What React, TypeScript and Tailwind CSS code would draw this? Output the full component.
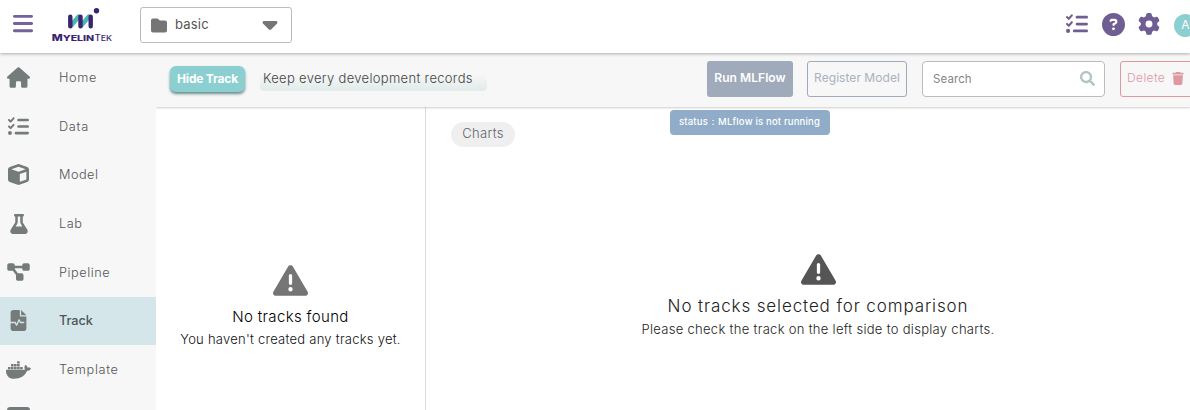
import React from 'react';
import {
  FaBars, FaFolder, FaCaretDown, FaListCheck, FaCircleQuestion, FaGear, FaHouse, FaCube, FaFlask,
  FaDiagramProject, FaFileWaveform, FaDocker, FaTriangleExclamation, FaTrash,
} from 'react-icons/fa6';
import { FaSearch } from 'react-icons/fa';
import type { IconType } from 'react-icons';

const items: { label: string; icon: IconType; size: string; text: string }[] = [
  { label: 'Home', icon: FaHouse, size: 'w-[23px] h-[21px]', text: 'tracking-[0.6px]' },
  { label: 'Data', icon: FaListCheck, size: 'w-[21px] h-[21px]', text: 'tracking-[0.7px]' },
  { label: 'Model', icon: FaCube, size: 'w-[21px] h-[21px]', text: 'tracking-[0.45px]' },
  { label: 'Lab', icon: FaFlask, size: 'w-[20px] h-[20px]', text: 'tracking-[0.5px]' },
  { label: 'Pipeline', icon: FaDiagramProject, size: 'w-[23px] h-[20px]', text: 'tracking-[0.55px]' },
  { label: 'Track', icon: FaFileWaveform, size: 'w-[21px] h-[21px]', text: 'tracking-[-0.1px]' },
  { label: 'Template', icon: FaDocker, size: 'w-[25px] h-[22px]', text: 'tracking-[0.65px]' },
];

function Logo() {
  return (
    <svg className="block h-[36px] w-[62px]" viewBox="0 0 62 36">
      <path d="M18.9 18.8 26.5 9.8M29 18.8 36.8 9.8" stroke="#45b9b3" strokeWidth="4.6" strokeLinecap="round" />
      <path d="M18.3 9.7V19.3M28.5 9.7V19.3M38.7 9.7V19.3" stroke="#3b2370" strokeWidth="4.4" strokeLinecap="round" />
      <circle cx="44.5" cy="3.8" r="2.7" fill="#3b2370" />
      <text x="-0.3" y="34.4" fill="#3b2370" fontFamily="Inter, sans-serif" fontWeight="800" textLength="42.5" lengthAdjust="spacingAndGlyphs">
        <tspan fontSize="8.4">M</tspan><tspan fontSize="7.6">YELIN</tspan>
      </text>
      <text x="42.5" y="34.4" fill="#3b2370" fontFamily="Inter, sans-serif" fontWeight="500" textLength="17.5" lengthAdjust="spacingAndGlyphs">
        <tspan fontSize="8.4">T</tspan><tspan fontSize="7.6">EK</tspan>
      </text>
    </svg>
  );
}

function Header() {
  return (
    <header className="relative z-20 flex h-[53px] shrink-0 items-start bg-white shadow-[0_1px_3px_rgba(0,0,0,0.3)]">
      <FaBars className="ml-[12px] mt-[12px] h-[23px] w-[22px] shrink-0 text-[#75629a]" />
      <div className="ml-[18px] mt-[7px]"><Logo /></div>
      <button className="ml-[26px] mt-[7px] flex h-[36px] w-[152px] items-center rounded-[3px] border border-[#bcbcbc] pl-[10px] pr-[13px] text-[#757575]">
        <FaFolder className="h-[17px] w-[16px]" />
        <span className="ml-[8px] text-[13px] tracking-[0.2px] text-[#555]">basic</span>
        <FaCaretDown className="-mt-[3px] ml-auto h-[24px] w-[16px]" />
      </button>
      <div className="ml-auto flex shrink-0 items-center pt-[11px] text-[#6f5e93]">
        <FaListCheck className="size-[22px]" />
        <FaCircleQuestion className="ml-[14px] size-[23px]" />
        <FaGear className="ml-[13px] size-[22px]" />
        <span className="-mr-[7px] ml-[14px] mt-[3px] flex size-[23px] items-center justify-center rounded-full bg-[#8ccfd1] pb-[2px] text-[12px] text-white">A</span>
      </div>
    </header>
  );
}

function Sidebar() {
  return (
    <nav className="h-full w-[156px] shrink-0 overflow-hidden bg-[#f7f7f7] pt-[0.3px] text-[#757b7b]">
      {items.map(({ label, icon: Icon, size, text }) => (
        <div key={label} className={`flex h-[48.66px] items-center ${label === 'Track' ? 'bg-[#d4e6ea] font-medium text-[#4c5659]' : 'font-light text-[#555]'}`}>
          <span className="ml-[4px] flex w-[29px] justify-center text-[#757b7b]"><Icon className={size} /></span>
          <span className={`ml-[26px] text-[12.75px] ${text}`}>{label}</span>
        </div>
      ))}
      <div className="ml-[7px] mt-[13px] h-4 w-[23px] rounded-[3px] bg-[#757b7b]" />
    </nav>
  );
}

function Toolbar() {
  return (
    <div className="relative z-10 flex h-[54px] shrink-0 items-start bg-[#f7f7f7] pt-[8px] shadow-[0_1px_2px_rgba(0,0,0,0.2)]">
      <button className="ml-[14px] mt-[5px] h-[26px] w-[75px] shrink-0 whitespace-nowrap rounded-[6px] bg-[#8ccfd1] pb-px text-[12px] font-bold tracking-[-0.2px] text-white shadow-[0_2px_3px_#668b8c]">Hide Track</button>
      <p className="ml-[15px] mt-[6px] h-[24px] w-[227px] shrink-0 whitespace-nowrap rounded-[4px] bg-linear-to-b from-[#f7f7f7] from-30% to-[#e0ebea] pl-[3px] text-[13px] font-light leading-[23px] tracking-[0.32px] text-[#444]">Keep every development records</p>
      <button className="ml-[220px] h-[36px] w-[86px] shrink-0 whitespace-nowrap rounded-[3px] bg-[#9fabba] pb-[2px] text-[12px] font-semibold tracking-[0.05px] text-white">Run MLFlow</button>
      <button className="ml-[14px] h-[36px] w-[100px] shrink-0 whitespace-nowrap rounded-[3px] border border-[#9fabba] pb-[2px] text-[12px] tracking-[0.05px] text-[#aab1c0]">Register Model</button>
      <div className="ml-[15px] flex h-[36px] w-[183px] shrink-0 items-center rounded-[4px] border border-[#bcbcbc] bg-white pl-[10px] pr-[9px]">
        <span className="pt-[2px] text-[11.5px] tracking-[0.1px] text-[#858585]">Search</span>
        <FaSearch className="-mt-[2px] ml-auto size-[15px] text-[#b3c4c8]" />
      </div>
      <button className="ml-[15px] flex h-[36px] w-[90px] shrink-0 items-center rounded-[3px] border border-[#de98a2] pb-[2px] pl-[6px] text-[12px] font-light tracking-[0.4px] text-[#de98a2]">
        Delete<FaTrash className="ml-[7px] h-[13px] w-[12px]" />
      </button>
    </div>
  );
}

export default function App() {
  return (
    <div className="flex h-[410px] w-[1190px] flex-col overflow-hidden bg-white font-['Inter',sans-serif]">
      <Header />
      <div className="flex min-h-0 flex-1">
        <Sidebar />
        <main className="flex min-w-0 flex-1 flex-col overflow-hidden">
          <Toolbar />
          <div className="relative flex min-h-0 flex-1">
            <div className="absolute left-[514px] top-[3px] z-20 h-[25px] w-[160px] whitespace-nowrap rounded-[4px] bg-[#90acc8] pl-[9px] text-[9.5px] font-medium leading-[24px] tracking-[0.18px] text-white">status：MLflow is not running</div>
            <section className="flex w-[270px] shrink-0 flex-col items-center border-r border-[#dcdcdc] pt-[156px]">
              <FaTriangleExclamation className="size-[35px] text-[#757575]" />
              <h2 className="mt-[8px] whitespace-nowrap text-[15px] font-light leading-[22px] tracking-[0.35px] text-black">No tracks found</h2>
              <p className="mt-[1px] whitespace-nowrap text-[13px] font-light leading-[20px] tracking-[0.25px] text-[#111]">You haven't created any tracks yet.</p>
            </section>
            <section className="flex min-w-0 flex-1 flex-col pl-[25px] pt-[15px]">
              <span className="flex h-[25px] w-[64px] items-center justify-center rounded-full bg-[#efefef] pb-px text-[13px] font-light tracking-[0.3px] text-[#5d646c]">Charts</span>
              <div className="ml-[-25px] mt-[105px] flex w-[784px] flex-col items-center">
                <FaTriangleExclamation className="size-[35px] text-[#555]" />
                <h2 className="mt-[7px] whitespace-nowrap text-[17px] font-light leading-[24px] tracking-[0.88px] text-[#222]">No tracks selected for comparison</h2>
                <p className="whitespace-nowrap text-[13px] font-light leading-[22px] tracking-[0.3px] text-[#222]">Please check the track on the left side to display charts.</p>
              </div>
            </section>
          </div>
        </main>
      </div>
    </div>
  );
}
